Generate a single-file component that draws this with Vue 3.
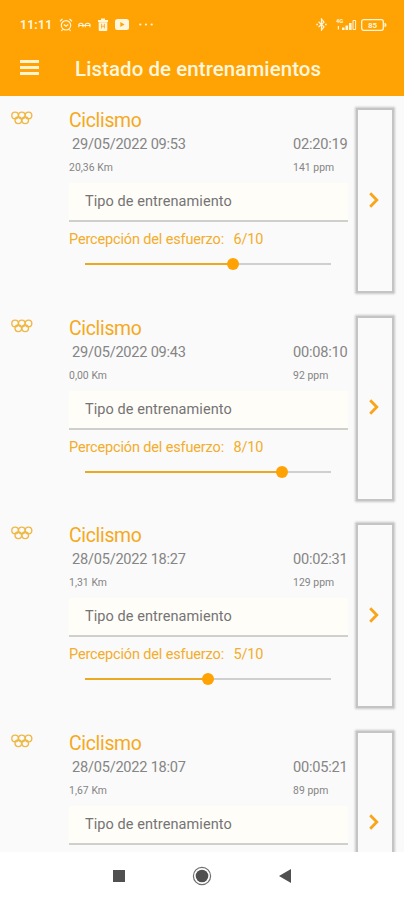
<template>
  <div class="screen">
    <header class="header">
      <div class="status">
        <span class="status__time">11:11</span>
        <svg class="status__alarm" width="14" height="14" viewBox="0 0 14 14" fill="none" stroke="currentColor" stroke-width="1.2">
          <circle cx="7" cy="7.3" r="4.7" />
          <path d="M1 3.2 3.5 1M13 3.2 10.5 1M4.8 6.5 7 8.3l2.2-1.8M3.6 11.5 2.5 13M10.4 11.5l1.1 1.5" />
        </svg>
        <svg class="status__link" width="13" height="6" viewBox="0 0 13 6" fill="none" stroke="currentColor" stroke-width="1.1">
          <path d="M.8 5.2V2.4Q3 0 5 2.4v2.8M1 3.5h4M7.3 5.2V2.4Q9.7 0 12 2.4v2.8M7.3 3.5H12M5 3.5h2" />
        </svg>
        <svg class="status__trash" width="10" height="13" viewBox="0 0 10 13">
          <path d="M0 2h3V.5h4V2h3v2H0zM.7 4.2h8.6V12q0 1-1 1H1.7q-1 0-1-1z" fill="currentColor" />
          <path d="M3.6 5.8v4.7M6.4 5.8v4.7M3.6 8.2h2.8" stroke="#ffa305" stroke-width=".8" />
        </svg>
        <svg class="status__video" width="14" height="11" viewBox="0 0 14 11">
          <rect width="14" height="11" rx="2.5" fill="currentColor" />
          <path d="m5.3 3 4.2 2.5L5.3 8z" fill="#ffa305" />
        </svg>
        <svg class="status__more" width="14" height="3" viewBox="0 0 14 3" fill="currentColor">
          <circle cx="1.3" cy="1.5" r="1.1" />
          <circle cx="7" cy="1.5" r="1.1" />
          <circle cx="12.7" cy="1.5" r="1.1" />
        </svg>
        <span class="status__spacer" />
        <svg class="status__bluetooth" width="11" height="13" viewBox="0 0 11 13" fill="none" stroke="currentColor" stroke-width="1.2">
          <path d="m2.5 3.7 5.5 5L5.5 12V1L8 4.2 2.5 9" />
          <path d="M.3 6.5h1.6M9.1 6.5h1.6" stroke-width="1.5" />
        </svg>
        <svg class="status__signal" width="21" height="13" viewBox="0 0 21 13" fill="currentColor">
          <text x="0" y="5" font-size="5.8" font-weight="700">4G</text>
          <path d="M1.8 8h1.2v3.5H1.8zM6 9.5h2.6V12H6zM9.5 7.5h2.6V12H9.5zM13 5h2.6v7H13z" />
          <path d="M17 2.5h2.6v9H17z" fill="none" stroke="currentColor" />
        </svg>
        <svg class="status__battery" width="26" height="12" viewBox="0 0 26 12">
          <rect x=".7" y=".7" width="21.6" height="10.6" rx="2" fill="none" stroke="currentColor" stroke-width="1.3" />
          <path d="M23.5 3.8q2 .4 2 2.2t-2 2.2z" fill="currentColor" />
          <text x="11.5" y="8.8" text-anchor="middle" font-size="8" font-weight="700" fill="currentColor">85</text>
        </svg>
      </div>
      <div class="toolbar">
        <button class="toolbar__menu" aria-label="Menú">
          <span /><span /><span />
        </button>
        <h1 class="toolbar__title">Listado de entrenamientos</h1>
      </div>
    </header>

    <main class="list">
      <article v-for="item in trainings" :key="item.date" class="training">
        <svg class="training__icon" width="22" height="14" viewBox="0 0 22 14" fill="none" stroke="currentColor" stroke-width="1.4">
          <circle cx="4.1" cy="4.4" r="3.3" />
          <circle cx="10.8" cy="4.4" r="3.3" />
          <circle cx="17.5" cy="4.4" r="3.3" />
          <circle cx="7.3" cy="9.3" r="3.3" />
          <circle cx="14.2" cy="9.3" r="3.3" />
        </svg>
        <div class="training__body">
          <h2 class="training__name">Ciclismo</h2>
          <div class="training__row training__row--main">
            <span class="training__date">{{ item.date }}</span>
            <span class="training__right">{{ item.duration }}</span>
          </div>
          <div class="training__row training__row--small">
            <span>{{ item.distance }} Km</span>
            <span class="training__right">{{ item.pulse }} ppm</span>
          </div>
          <div class="training__type">Tipo de entrenamiento</div>
          <template v-if="item.effort">
            <div class="training__effort">
              <span>Percepción del esfuerzo:</span>
              <span>{{ item.effort }}/10</span>
            </div>
            <div class="slider">
              <div class="slider__fill" :style="{ width: item.effort * 10 + '%' }" />
              <div class="slider__thumb" />
            </div>
          </template>
        </div>
        <button class="training__open" aria-label="Abrir">
          <svg width="10" height="16" viewBox="0 0 10 16" fill="none" stroke="currentColor" stroke-width="2.8">
            <path d="m1.2 1.2 6.6 6.8-6.6 6.8" />
          </svg>
        </button>
      </article>
    </main>

    <nav class="navbar">
      <svg width="12" height="12" viewBox="0 0 12 12"><rect width="12" height="12" fill="#505050" /></svg>
      <svg width="20" height="20" viewBox="0 0 20 20">
        <circle cx="10" cy="10" r="8.6" fill="none" stroke="#707070" stroke-width="1.2" />
        <circle cx="10" cy="10" r="6.3" fill="#505050" />
      </svg>
      <svg width="12" height="14" viewBox="0 0 12 14"><path d="M12 0v14L0 7z" fill="#505050" /></svg>
    </nav>
  </div>
</template>

<script setup>
const trainings = [
  { date: "29/05/2022 09:53", duration: "02:20:19", distance: "20,36", pulse: 141, effort: 6 },
  { date: "29/05/2022 09:43", duration: "00:08:10", distance: "0,00", pulse: 92, effort: 8 },
  { date: "28/05/2022 18:27", duration: "00:02:31", distance: "1,31", pulse: 129, effort: 5 },
  { date: "28/05/2022 18:07", duration: "00:05:21", distance: "1,67", pulse: 89, effort: null },
];
</script>

<style>
body {
  margin: 0;
  overflow: hidden;
}
</style>

<style scoped>
.screen {
  display: flex;
  flex-direction: column;
  width: 404px;
  height: 900px;
  overflow: hidden;
  background: #fafafa;
  font-family: Roboto, sans-serif;
}

button {
  padding: 0;
  border: 0;
  background: none;
}

.header {
  flex: none;
  height: 96px;
  background: #ffa305;
  color: #fff6dc;
}

.status {
  display: flex;
  align-items: center;
  height: 49px;
  padding: 0 17px 0 20px;
}

.status__time {
  width: 33px;
  font-size: 12px;
  font-weight: 700;
  letter-spacing: 0.3px;
}

.status__alarm {
  margin-left: 6px;
}

.status__link {
  margin-left: 5px;
}

.status__trash {
  margin-left: 7px;
}

.status__video {
  margin-left: 7px;
}

.status__more {
  margin-left: 10px;
}

.status__spacer {
  flex: 1;
}

.status__signal {
  margin-left: 9px;
}

.status__battery {
  margin-left: 4px;
}

.toolbar {
  display: flex;
  align-items: center;
  height: 40px;
  padding-left: 20px;
}

.toolbar__menu {
  display: flex;
  flex-direction: column;
  gap: 3px;
  width: 19px;
  margin-top: -3px;
}

.toolbar__menu span {
  height: 3px;
  background: #fff3d2;
}

.toolbar__title {
  margin: 0 0 0 36px;
  font-size: 20.5px;
  font-weight: 500;
  letter-spacing: 0.06px;
  white-space: nowrap;
}

.list {
  flex: 1;
  min-height: 0;
  padding-top: 11px;
  overflow: hidden;
}

.training {
  display: flex;
  align-items: flex-start;
  height: 207.5px;
}

.training__icon {
  flex: none;
  margin: 4px 0 0 11px;
  color: #efb947;
}

.training__body {
  width: 279px;
  margin-left: 36px;
}

.training__name {
  margin: 2px 0 0;
  color: #f5a91c;
  font-size: 19.4px;
  font-weight: 400;
  letter-spacing: -0.3px;
  line-height: 24px;
}

.training__row {
  display: flex;
  justify-content: space-between;
  color: #858585;
}

.training__row--main {
  padding-left: 3px;
  font-size: 14.6px;
  letter-spacing: -0.24px;
  line-height: 23px;
}

.training__row--small {
  font-size: 10.4px;
  letter-spacing: 0.05px;
  line-height: 23px;
}

.training__right {
  width: 55px;
  white-space: nowrap;
}

.training__type {
  height: 37px;
  margin-top: 4px;
  padding-left: 16px;
  border-bottom: 2px solid #cfcfcc;
  background: #fffdf8;
  color: #747474;
  font-size: 14.5px;
  letter-spacing: 0.07px;
  line-height: 37px;
}

.training__effort {
  display: flex;
  gap: 9.5px;
  margin-top: 8px;
  color: #f3ad2b;
  font-size: 14.5px;
  letter-spacing: -0.15px;
  line-height: 20px;
  white-space: nowrap;
}

.slider {
  display: flex;
  align-items: center;
  width: 246px;
  height: 12px;
  margin: 8px 0 0 16px;
  background: linear-gradient(#cfcfcf, #cfcfcf) center / 100% 2px no-repeat;
}

.slider__fill {
  height: 2px;
  background: #eaa920;
}

.slider__thumb {
  flex: none;
  width: 12px;
  height: 12px;
  margin-left: -6px;
  border-radius: 50%;
  background: #ffa305;
}

.training__open {
  display: flex;
  align-items: center;
  justify-content: center;
  box-sizing: border-box;
  width: 38px;
  height: 185px;
  margin: 1px 0 0 7.5px;
  padding: 0 2px 2px 0;
  border: 2px solid #c4c4c4;
  box-shadow: 0 0 2px 1px #c8c8c8;
  color: #f9a51a;
}

.navbar {
  display: flex;
  flex: none;
  align-items: center;
  justify-content: center;
  gap: 73px;
  height: 48px;
  background: #fff;
}

.navbar svg:nth-child(2) {
  margin: 0 -6px;
}
</style>
